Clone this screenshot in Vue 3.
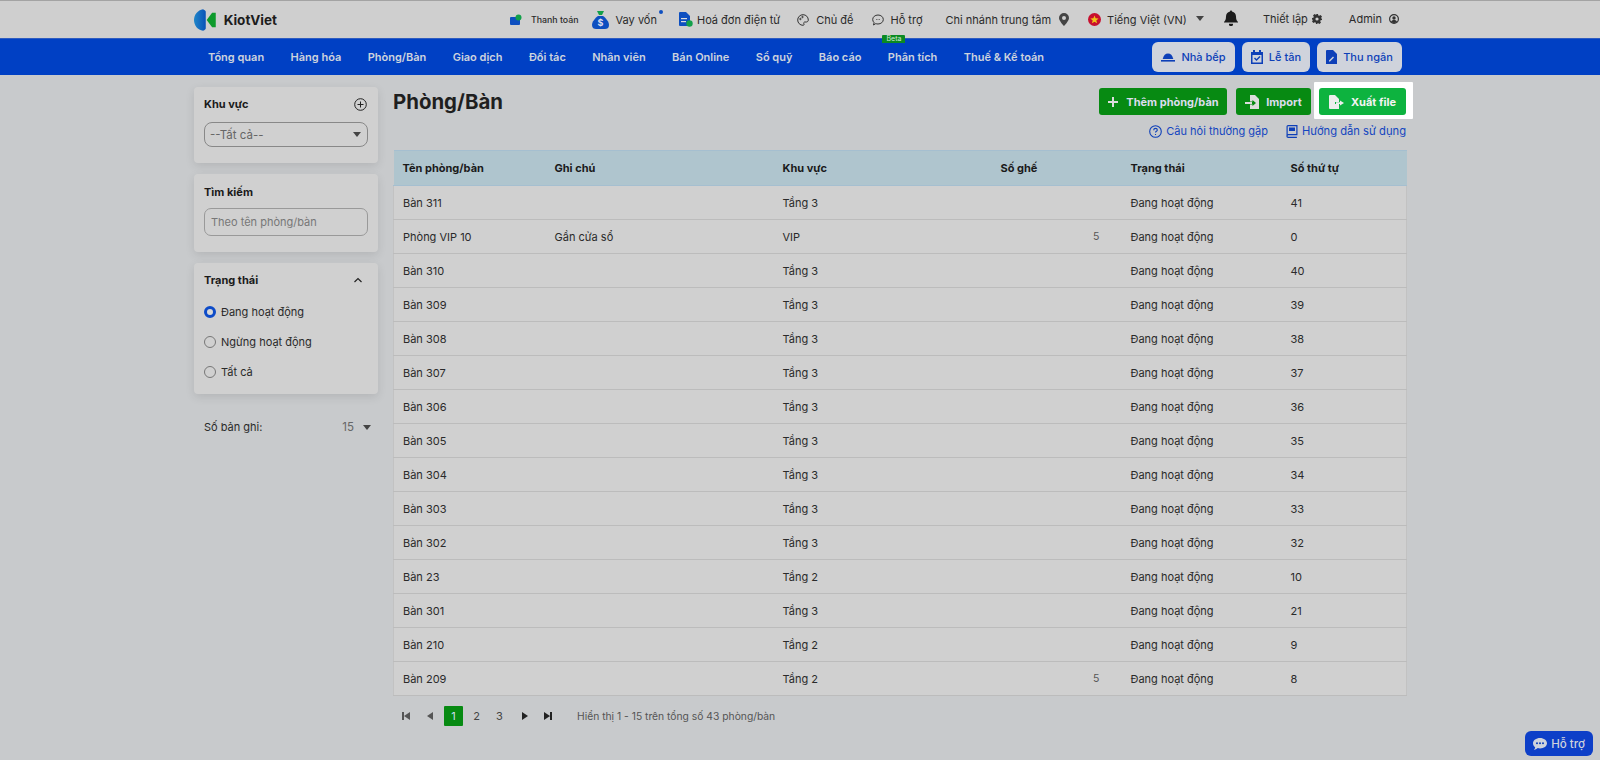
<script setup>
const nav = ['Tổng quan','Hàng hóa','Phòng/Bàn','Giao dịch','Đối tác','Nhân viên','Bán Online','Sổ quỹ','Báo cáo','Phân tích','Thuế & Kế toán']
const rows = [
 ['Bàn 311','','Tầng 3','',41],['Phòng VIP 10','Gần cửa sổ','VIP',5,0],['Bàn 310','','Tầng 3','',40],['Bàn 309','','Tầng 3','',39],
 ['Bàn 308','','Tầng 3','',38],['Bàn 307','','Tầng 3','',37],['Bàn 306','','Tầng 3','',36],['Bàn 305','','Tầng 3','',35],
 ['Bàn 304','','Tầng 3','',34],['Bàn 303','','Tầng 3','',33],['Bàn 302','','Tầng 3','',32],['Bàn 23','','Tầng 2','',10],
 ['Bàn 301','','Tầng 3','',21],['Bàn 210','','Tầng 2','',9],['Bàn 209','','Tầng 2',5,8]
]
</script>

<template>
  <div class="page">
    <header class="top">
      <div class="wrap top-in">
        <div class="logo">
          <svg width="25" height="24" viewBox="0 0 25 24"><defs><linearGradient id="lg" x1="0" x2="1"><stop offset="0" stop-color="#1f86c8"/><stop offset="1" stop-color="#0a52b8"/></linearGradient></defs><path d="M10 0C4 1 0 6 0 12s4 11 10 12c2-1 3-2 3-3V3c0-1-1-2-3-3z" fill="url(#lg)"/><path d="M24 4v16l-4 0-6-8 6-8z" fill="#0d9a2b"/></svg>
          <span>KiotViet</span>
        </div>
        <div class="i i1">
          <svg width="12" height="12" viewBox="0 0 12 12"><rect x="0" y="3" width="10" height="8" rx="1" fill="#0d4fc0"/><circle cx="8.5" cy="3.5" r="3" fill="#12a04a"/></svg>
          <span class="small">Thanh toán</span>
        </div>
        <div class="i i2">
          <svg width="17" height="18" viewBox="0 0 17 18"><path d="M5 0h7l-2 4H7z" fill="#12a04a"/><path d="M6 5h5c3 2 6 6 6 9 0 3-2 4-4 4H4c-2 0-4-1-4-4 0-3 3-7 6-9z" fill="#0d4fc0"/><text x="8.5" y="15" text-anchor="middle" font-size="9" font-weight="700" fill="#dde">$</text></svg>
          <span>Vay vốn</span><b class="dot"></b>
        </div>
        <div class="i i3">
          <svg width="14" height="15" viewBox="0 0 14 15"><path d="M0 1a1 1 0 0 1 1-1h6l4 4v10H1a1 1 0 0 1-1-1z" fill="#0d4fc0"/><rect x="2" y="6" width="6" height="1.2" fill="#ddd"/><rect x="2" y="9" width="5" height="1.2" fill="#ddd"/><circle cx="10.5" cy="11.5" r="3.2" fill="#12a04a"/></svg>
          <span>Hoá đơn điện tử</span>
        </div>
        <div class="i i4">
          <svg width="12" height="12" viewBox="0 0 12 12" fill="none" stroke="#333" stroke-width="1"><path d="M6 .7a5.3 5.3 0 1 0 0 10.6c1.2 0 1.2-1 .8-1.7-.4-.8.2-1.6 1-1.6h1.6c1 0 1.9-.8 1.9-2C11.300 3 9 .7 6 .7z"/><circle cx="3.400" cy="5" r=".7"/><circle cx="5.500" cy="3" r=".7"/></svg>
          <span>Chủ đề</span>
        </div>
        <div class="i i5">
          <svg width="12" height="12" viewBox="0 0 12 12" fill="none" stroke="#333" stroke-width="1"><path d="M6 1c3 0 5.300 2 5.300 4.500S9 10 6 10c-.8 0-1.500-.1-2.200-.4L1.500 11l.6-2.300C1.200 7.800.7 6.700.7 5.500.7 3 3 1 6 1z"/><path d="M4 5.500h.6M5.700 5.500h.6M7.400 5.500H8"/></svg>
          <span>Hỗ trợ</span><em class="beta">Beta</em>
        </div>
        <div class="i i6">
          <span>Chi nhánh trung tâm</span>
          <svg width="10" height="13" viewBox="0 0 10 13"><path fill-rule="evenodd" d="M5 0a5 5 0 0 1 5 5c0 3-5 8-5 8S0 8 0 5a5 5 0 0 1 5-5zm0 3a2 2 0 1 0 0 4 2 2 0 0 0 0-4z" fill="#444"/></svg>
        </div>
        <div class="i i7">
          <svg width="13" height="13" viewBox="0 0 13 13"><circle cx="6.500" cy="6.500" r="6.500" fill="#c8102e"/><path d="M6.500 2.500l1.100 2.800 3 .2-2.300 1.900.8 2.900-2.600-1.600-2.600 1.600.8-2.900-2.300-1.900 3-.2z" fill="#f0c419"/></svg>
          <span>Tiếng Việt (VN)</span>
          <i class="caret c-top"></i>
        </div>
        <div class="i i8">
          <svg width="14" height="17" viewBox="0 0 14 16"><path d="M7 0c.7 0 1 .5 1 1.100C10.500 1.600 12 3.600 12 6c0 3 .8 4.300 2 5.500V12H0v-.5C1.200 10.300 2 9 2 6c0-2.400 1.500-4.400 4-4.900C6 .5 6.300 0 7 0zM5 13.200h4A2 2 0 0 1 7 15.500a2 2 0 0 1-2-2.300z" fill="#1c1c1c"/></svg>
        </div>
        <div class="i i9">
          <span>Thiết lập</span>
          <svg width="10" height="10" viewBox="0 0 10 10"><path fill-rule="evenodd" d="M4 0h2l.3 1.400.9.400L8.500 1 10 2.500l-.8 1.300.4.900L10 5v1l-1.400.3-.4.900.8 1.300L7.500 10l-1.300-.8-.9.400L5 10H4l-.3-1.400-.9-.4-1.300.8L0 7.500l.8-1.300-.4-.9L0 6V4l1.400-.3.400-.9L1 1.500 2.500 0l1.300.8.900-.4zM5 3.400a1.600 1.600 0 1 0 0 3.200 1.600 1.600 0 0 0 0-3.200z" fill="#333"/></svg>
        </div>
        <div class="i i10">
          <span>Admin</span>
          <svg width="10" height="10" viewBox="0 0 10 10"><circle cx="5" cy="5" r="4.400" fill="none" stroke="#333" stroke-width="1.200"/><circle cx="5" cy="4" r="1.700" fill="#333"/><path d="M2 8c.5-1.500 1.500-2 3-2s2.500.5 3 2c-1.500 1.200-4.500 1.200-6 0z" fill="#333"/></svg>
        </div>
      </div>
    </header>

    <nav class="nav">
      <div class="wrap nav-in">
        <div class="nav-links"><a v-for="n in nav" :key="n">{{ n }}</a></div>
        <div class="nav-btns">
          <button class="b1">
            <svg width="14" height="12" viewBox="0 0 14 12"><path d="M7 2.500c2.600 0 4.300 1.800 5.300 5.500H1.700C2.700 4.300 4.400 2.500 7 2.500z" fill="#0d3fb8"/><rect y="9" width="14" height="1.600" fill="#0d3fb8"/></svg>
            Nhà bếp
          </button>
          <button class="b2">
            <svg width="12" height="14" viewBox="0 0 12 14"><path fill-rule="evenodd" d="M2 0h2v2h4V0h2v2h2v12H0V2h2zm-.5 5v7.500h9V5zM3 8.500l1-1 1.500 1.500L8.500 6l1 1-4 4z" fill="#0d3fb8"/></svg>
            Lễ tân
          </button>
          <button class="b3">
            <svg width="11" height="14" viewBox="0 0 11 14"><path d="M1 0h6l4 4v10H0V1a1 1 0 0 1 1-1z" fill="#0d3fb8"/><path d="M3 10.500l4-4 1 1-4 4H3z" fill="#cfd3dc"/></svg>
            Thu ngân
          </button>
        </div>
      </div>
    </nav>

    <main class="wrap main">
      <aside class="side">
        <section class="card c1">
          <div class="ch"><b>Khu vực</b>
            <svg width="13" height="13" viewBox="0 0 13 13" fill="none" stroke="#222" stroke-width="1"><circle cx="6.500" cy="6.500" r="5.800"/><path d="M6.500 3.500v6M3.500 6.500h6"/></svg>
          </div>
          <div class="select"><span>--Tất cả--</span><i class="caret"></i></div>
        </section>
        <section class="card c2">
          <div class="ch"><b>Tìm kiếm</b></div>
          <div class="input">Theo tên phòng/bàn</div>
        </section>
        <section class="card c3">
          <div class="ch"><b>Trạng thái</b>
            <svg width="10" height="6" viewBox="0 0 10 6" fill="none" stroke="#222" stroke-width="1.200"><path d="M1.500 5L5 1.500 8.500 5"/></svg>
          </div>
          <label class="radio"><i class="on"></i>Đang hoạt động</label>
          <label class="radio"><i></i>Ngừng hoạt động</label>
          <label class="radio"><i></i>Tất cả</label>
        </section>
        <div class="rec"><span>Số bản ghi:</span><span class="rec-v">15<i class="caret"></i></span></div>
      </aside>

      <div class="content">
        <div class="head">
          <h1>Phòng/Bàn</h1>
          <div class="actions">
            <button class="gb add">
              <svg width="12" height="12" viewBox="0 0 12 12"><path d="M5 1h2v4h4v2H7v4H5V7H1V5h4z" fill="#ddd"/></svg>
              Thêm phòng/bàn
            </button>
            <button class="gb imp">
              <svg width="14" height="14" viewBox="0 0 14 14"><path d="M5 0h5l4 4v10H5V9.500h2.500V11L11 8 7.500 5v1.500H5z" fill="#ddd"/><path d="M0 7h7v2H0z" fill="#ddd"/></svg>
              Import
            </button>
            <div class="hl">
              <button class="gb exp">
                <svg width="15" height="14" viewBox="0 0 15 14"><path d="M1 0h5l4 4v3H6v2h4v5H1a1 1 0 0 1-1-1V1a1 1 0 0 1 1-1z" fill="#eee"/><path d="M7 7.200h4V5.500L15 8l-4 2.500V9H7z" fill="#eee"/></svg>
                Xuất file
              </button>
            </div>
          </div>
        </div>
        <div class="links">
          <a class="faq"><svg width="13" height="13" viewBox="0 0 13 13" fill="none" stroke="#0d3fb8" stroke-width="1.100"><circle cx="6.500" cy="6.500" r="5.800"/><path d="M4.700 5.200c0-1.100.8-1.800 1.800-1.800s1.800.7 1.800 1.600c0 1.300-1.800 1.300-1.800 2.600"/><path d="M6.500 9v1"/></svg>Câu hỏi thường gặp</a>
          <a><svg width="12" height="13" viewBox="0 0 11 13" fill="none" stroke="#0d3fb8" stroke-width="1.200"><path d="M.6 11V1.500a.9.900 0 0 1 .9-.9h8.900v9H1.800a1.200 1.200 0 0 0 0 2.800h8.600"/><rect x="2.500" y="2.500" width="6" height="3.500" fill="#0d3fb8" stroke="none"/></svg>Hướng dẫn sử dụng</a>
        </div>
        <table>
          <thead><tr><th class="w1">Tên phòng/bàn</th><th class="w2">Ghi chú</th><th class="w3">Khu vực</th><th class="w4">Số ghế</th><th class="w5">Trạng thái</th><th class="w6">Số thứ tự</th></tr></thead>
          <tbody>
            <tr v-for="r in rows" :key="r[0]">
              <td>{{ r[0] }}</td><td>{{ r[1] }}</td><td>{{ r[2] }}</td><td class="num">{{ r[3] }}</td><td>Đang hoạt động</td><td>{{ r[4] }}</td>
            </tr>
          </tbody>
        </table>
        <div class="pager">
          <svg class="pi" width="8" height="8" viewBox="0 0 8 8"><path d="M0 0h2v8H0zM8 0v8L2 4z" fill="#555"/></svg>
          <svg class="pi p2" width="6" height="8" viewBox="0 0 6 8"><path d="M6 0v8L0 4z" fill="#555"/></svg>
          <span class="pg active">1</span><span class="pg">2</span><span class="pg">3</span>
          <svg class="pi p3" width="6" height="8" viewBox="0 0 6 8"><path d="M0 0v8l6-4z" fill="#222"/></svg>
          <svg class="pi p4" width="8" height="8" viewBox="0 0 8 8"><path d="M0 0v8l6-4zM6 0h2v8H6z" fill="#222"/></svg>
          <span class="ptxt">Hiển thị 1 - 15 trên tổng số 43 phòng/bàn</span>
        </div>
      </div>
    </main>

    <button class="help">
      <svg width="14" height="12" viewBox="0 0 14 12"><path d="M7 0c3.900 0 7 2.300 7 5.200s-3.100 5.200-7 5.200c-.8 0-1.500-.1-2.200-.3C3.700 11 2.300 11.700.8 12c.8-.8 1.300-1.700 1.400-2.800C.8 8.300 0 6.800 0 5.200 0 2.300 3.100 0 7 0z" fill="#cfd3dc"/><circle cx="4" cy="5.200" r="1" fill="#0d3fb8"/><circle cx="7" cy="5.200" r="1" fill="#0d3fb8"/><circle cx="10" cy="5.200" r="1" fill="#0d3fb8"/></svg>
      Hỗ trợ
    </button>
  </div>
</template>

<style>
html, body { margin: 0; background: #c8cacc; }
</style>

<style scoped>
.page { height: 760px; overflow: hidden; position: relative; background: #c8cacc; font-family: Inter, "Noto Sans", sans-serif; font-size: 11px; color: #222; }
.wrap { width: 1212px; margin: 0 auto; box-sizing: border-box; }
button { font-family: inherit; border: 0; cursor: pointer; }

.top { height: 38px; box-sizing: border-box; background: #cfcfcf; border-top: 1px solid #a3a3a3; }
.top-in { display: flex; align-items: center; height: 37px; font-size: 11px; color: #2a2a2a; position: relative; }
.logo { display: flex; align-items: center; gap: 7px; font-size: 13.500px; font-weight: 700; color: #1c1c1c; margin-right: 233px; width: 83px; flex: none; }
.i { display: flex; align-items: center; position: relative; flex: none; white-space: nowrap; }
.small { font-size: 8.800px; font-weight: 500; margin-left: 9px; }
.i1 { margin-left: 0; }
.i2 { margin-left: 13px; gap: 7px; }
.i3 { margin-left: 22px; gap: 4px; }
.i4 { margin-left: 17px; gap: 7px; }
.i5 { margin-left: 19px; gap: 6px; }
.i6 { margin-left: 23px; gap: 8px; }
.i7 { margin-left: 19px; gap: 6px; }
.i8 { margin-left: 20px; margin-top: -3px; }
.i9 { margin-left: 25px; gap: 4px; margin-top: -2px; }
.i10 { margin-left: 27px; gap: 7px; margin-top: -2px; }
.dot { position: absolute; right: -6px; top: -1px; width: 4px; height: 4px; border-radius: 50%; background: #0d4fc0; }
.beta { position: absolute; left: 10px; top: 22px; width: 23px; height: 8px; background: #0b8a22; color: #d5e8d5; font-size: 7px; line-height: 8px; text-align: center; font-style: normal; border-radius: 1px 1px 0 0; }
.caret { display: inline-block; width: 0; height: 0; border-left: 4.500px solid transparent; border-right: 4.500px solid transparent; border-top: 5px solid #444; }
.c-top { margin-left: 3px; margin-top: -3px; }

.nav { height: 37px; background: #0040c4; border-top: 1px solid #2f5cc0; box-sizing: border-box; }
.nav-in { display: flex; align-items: center; justify-content: space-between; height: 36px; padding: 0 4px 0 14px; }
.nav-links { display: flex; gap: 26.400px; color: #cdd3dd; font-size: 11px; font-weight: 600; white-space: nowrap; }
.nav-btns { display: flex; gap: 7px; }
.nav-btns button { height: 30px; border-radius: 6px; background: #cfd3dc; color: #0d3fb8; font-size: 11px; font-weight: 500; display: flex; align-items: center; justify-content: center; gap: 6px; padding: 0; }
.b1 { width: 83px; }
.b2 { width: 68px; }
.b3 { width: 85px; }

.main { display: flex; align-items: flex-start; }
.side { width: 184px; flex: none; padding-top: 12px; }
.card { background: #d0d0d0; border-radius: 4px; box-shadow: 0 3px 10px rgba(0,0,0,.1); padding: 0 10px; box-sizing: border-box; margin-bottom: 11px; }
.c1 { height: 76px; padding-top: 9px; }
.c2 { height: 78px; padding-top: 10px; }
.c3 { height: 131px; padding-top: 9px; }
.ch { display: flex; justify-content: space-between; align-items: center; height: 16px; font-size: 11px; color: #1a1a1a; padding-right: 1px; }
.ch b { font-weight: 700; }
.select { height: 25px; margin-top: 10px; border: 1px solid #888; border-radius: 8px; box-sizing: border-box; display: flex; align-items: center; justify-content: space-between; padding: 0 6px 0 5px; font-size: 11.500px; color: #666; }
.input { height: 28px; margin-top: 8px; border: 1px solid #999; border-radius: 7px; box-sizing: border-box; display: flex; align-items: center; padding: 0 6px; font-size: 11px; color: #777; }
.c3 .ch { padding-right: 5px; margin-bottom: 9px; }
.radio { display: flex; align-items: center; gap: 5px; height: 30.200px; font-size: 11px; color: #2a2a2a; }
.radio i { width: 12px; height: 12px; border-radius: 50%; border: 1px solid #777; box-sizing: border-box; flex: none; }
.radio i.on { border: 3.500px solid #0d4bc8; background: #d8d8d8; }
.rec { display: flex; justify-content: space-between; align-items: center; padding: 15px 7px 0 10px; font-size: 11px; color: #2a2a2a; }
.rec-v { display: flex; align-items: center; gap: 9px; color: #666; font-size: 11.500px; }

.content { width: 1013px; margin-left: 15px; flex: none; }
.head { display: flex; justify-content: space-between; align-items: flex-start; padding-top: 13px; height: 40px; box-sizing: content-box; }
h1 { margin: 1px 0 0; font-size: 20.400px; font-weight: 700; line-height: 26px; color: #1f1f1f; }
.actions { display: flex; align-items: center; gap: 9px; }
.gb { height: 27px; border-radius: 3px; background: #078a12; color: #dde; font-size: 11px; font-weight: 700; display: flex; align-items: center; justify-content: center; gap: 7px; padding: 0; }
.add { width: 128px; }
.imp { width: 75px; }
.hl { background: #fff; padding: 6px 7px 4px 5px; margin: -6px -7px -4px -6px; border-radius: 1px; }
.exp { width: 87px; background: #0db33f; color: #f4f4f4; }
.links { display: flex; justify-content: flex-end; gap: 18px; height: 24px; margin-top: -9px; align-items: center; color: #1446c0; font-size: 11.200px; }
.links a { display: flex; align-items: center; gap: 4px; }
.faq { font-size: 11px; }
table { width: 1013px; table-layout: fixed; border-collapse: collapse; margin-top: 7px; }
th { background: #afc5ce; height: 35px; box-sizing: border-box; padding: 0 9px; font-size: 11px; font-weight: 700; color: #1a1a1a; text-align: left; border: 1px solid #a5bfd0; border-width: 1px 0; }
td { height: 34px; box-sizing: border-box; padding: 0 9px; background: #d0d0d0; border-bottom: 1px solid #bcbcbc; color: #2a2a2a; font-size: 11px; }
td:first-child { border-left: 1px solid #c2c2c2; }
td:last-child { border-right: 1px solid #c2c2c2; }
.w1 { width: 152px; }
.w2 { width: 228px; }
.w3 { width: 218px; }
.w4 { width: 130px; }
.w5 { width: 160px; }
.w6 { width: 125px; }
.num { text-align: right; padding-right: 22px; color: #555; font-size: 10.500px; }
.pager { display: flex; align-items: center; height: 20px; margin-top: 10px; padding-left: 9px; color: #444; font-size: 11px; }
.p2 { margin-left: 17px; }
.pg { width: 19px; height: 20px; margin-left: 4px; display: flex; align-items: center; justify-content: center; }
.pg.active { background: #078a12; color: #cde; margin-left: 11px; border-radius: 1px; }
.p3 { margin-left: 13px; }
.p4 { margin-left: 16px; }
.ptxt { margin-left: 25px; color: #555; font-size: 10.300px; }
.help { position: absolute; left: 1525px; top: 731px; width: 68px; height: 25px; border-radius: 6px; background: #0d3fc8; color: #cfd3dc; font-size: 11.500px; font-weight: 500; display: flex; align-items: center; justify-content: center; gap: 4px; padding: 0; }
</style>
